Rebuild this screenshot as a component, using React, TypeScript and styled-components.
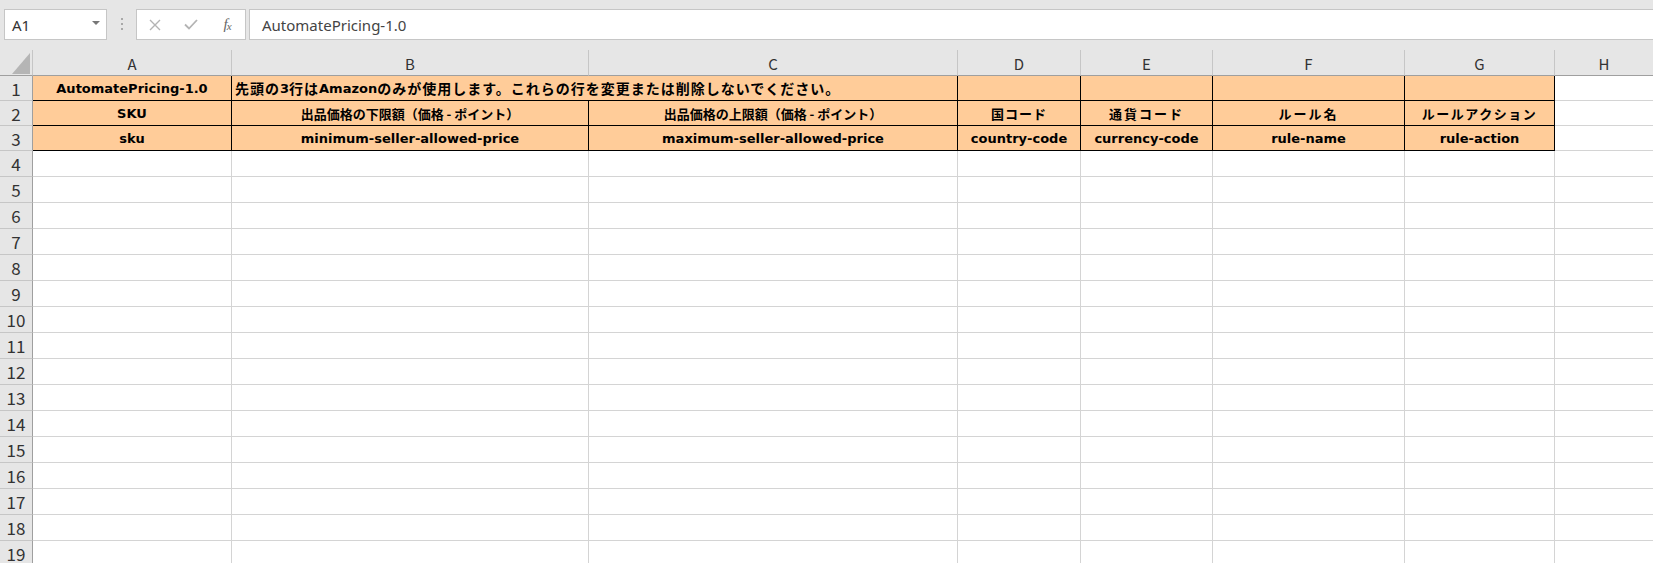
import React from 'react';
import styled, { createGlobalStyle } from 'styled-components';

const GlobalStyle = createGlobalStyle`
  html, body {
    margin: 0;
    padding: 0;
    background: #e6e6e6;
    overflow: hidden;
  }
  body {
    width: 1653px;
    height: 563px;
    font-family: "Noto Sans", "Noto Sans CJK JP", sans-serif;
  }
`;

const Window = styled.div`
  width: 1653px;
  height: 563px;
  display: flex;
  flex-direction: column;
  overflow: hidden;
  background: #e6e6e6;
`;

/* ---------- formula bar ---------- */

const FormulaBar = styled.div`
  flex-shrink: 0;
  height: 50px;
  box-sizing: border-box;
  padding: 9px 0 0 4px;
  display: flex;
  align-items: flex-start;
`;

const NameBox = styled.div`
  box-sizing: border-box;
  width: 103px;
  height: 31px;
  background: #fff;
  border: 1px solid #c6c6c6;
  display: flex;
  align-items: center;
  justify-content: space-between;
  padding: 0 6px 0 7px;
  font: 15px "Noto Sans", sans-serif;
  color: #333;
`;

const DropArrow = styled.span`
  width: 0;
  height: 0;
  border-left: 4px solid transparent;
  border-right: 4px solid transparent;
  border-top: 4px solid #777;
  margin-top: -4px;
`;

const Grip = styled.div`
  width: 29px;
  height: 31px;
  display: flex;
  flex-direction: column;
  align-items: center;
  justify-content: center;
  gap: 3px;
  padding-bottom: 2px;
  box-sizing: border-box;
`;

const GripDot = styled.span`
  width: 2px;
  height: 2px;
  background: #a8a8a8;
`;

const FuncBox = styled.div`
  box-sizing: border-box;
  width: 110px;
  height: 31px;
  background: #fff;
  border: 1px solid #c6c6c6;
  display: flex;
  align-items: center;
  padding-left: 10px;
  gap: 20px;
`;

const FuncIcon = styled.span`
  width: 16px;
  height: 16px;
  display: flex;
  align-items: center;
  justify-content: center;
`;

const Fx = styled.span`
  font-family: "Liberation Serif", serif;
  font-style: italic;
  font-size: 15px;
  color: #666;
  letter-spacing: -1px;
  line-height: 1;
`;

const FxSub = styled.span`
  font-size: 11px;
  position: relative;
  top: 1px;
`;

const FormulaInput = styled.div`
  box-sizing: border-box;
  flex: 1;
  margin-left: 3px;
  height: 31px;
  background: #fff;
  border: 1px solid #c6c6c6;
  border-right: none;
  display: flex;
  align-items: center;
  padding-left: 12px;
  font: 15px "Noto Sans", sans-serif;
  color: #444;
`;

/* ---------- sheet ---------- */

const Sheet = styled.div`
  display: grid;
  grid-template-columns: 33px 199px 357px 369px 123px 132px 192px 150px 99px;
  grid-template-rows: 26px 25px 25px 25px repeat(16, 26px);
  background: #fff;
`;

const Corner = styled.div`
  box-sizing: border-box;
  background: #e6e6e6;
  border-right: 1px solid #c6c6c6;
  border-bottom: 1px solid #9f9f9f;
  display: flex;
  align-items: flex-end;
  justify-content: flex-end;
  padding: 0 2px 1px 0;
`;

const ColHeader = styled.div`
  box-sizing: border-box;
  background: #e6e6e6;
  border-right: 1px solid #c6c6c6;
  border-bottom: 1px solid #9f9f9f;
  display: flex;
  align-items: center;
  justify-content: center;
  font: 15px "Noto Sans CJK JP", sans-serif;
  color: #333;
  padding-top: 1px;
`;

const RowHeader = styled.div`
  box-sizing: border-box;
  background: #e6e6e6;
  border-right: 1px solid #9f9f9f;
  border-bottom: 1px solid #c6c6c6;
  display: flex;
  align-items: center;
  justify-content: center;
  font: 17px "Noto Sans CJK JP", sans-serif;
  color: #333;
`;

const Cell = styled.div<{ $filled?: boolean; $left?: boolean; $span?: number }>`
  box-sizing: border-box;
  min-width: 0;
  grid-column: span ${p => p.$span ?? 1};
  display: flex;
  align-items: center;
  justify-content: ${p => (p.$left ? 'flex-start' : 'center')};
  padding: 0 3px;
  background: ${p => (p.$filled ? '#ffcc99' : '#fff')};
  border-right: 1px solid ${p => (p.$filled ? '#000' : '#d4d4d4')};
  border-bottom: 1px solid ${p => (p.$filled ? '#000' : '#d4d4d4')};
  font: bold 13px "DejaVu Sans", "Noto Sans CJK JP", sans-serif;
  color: #000;
  white-space: nowrap;
  overflow: visible;
`;

const Jp = styled.span<{ $size?: number; $spacing?: number }>`
  font-family: "Noto Sans CJK JP", sans-serif;
  font-weight: 700;
  font-size: ${p => p.$size ?? 13}px;
  letter-spacing: ${p => p.$spacing ?? 0}px;
`;

const columns = ['A', 'B', 'C', 'D', 'E', 'F', 'G', 'H'];

const CloseIcon = () => (
  <svg width="12" height="12" viewBox="0 0 12 12">
    <path d="M1 1 L11 11 M11 1 L1 11" stroke="#b4b4b4" strokeWidth="1.4" fill="none" />
  </svg>
);

const CheckIcon = () => (
  <svg width="14" height="11" viewBox="0 0 14 11">
    <path d="M1 5.5 L5 9.5 L13 1" stroke="#b4b4b4" strokeWidth="1.8" fill="none" />
  </svg>
);

const SelectAll = () => (
  <svg width="18" height="21" viewBox="0 0 18 21">
    <polygon points="18,0 18,21 0,21" fill="#b5b5b5" />
  </svg>
);

export default function App() {
  const emptyRows = Array.from({ length: 16 }, (_, i) => i + 4);
  return (
    <Window>
      <GlobalStyle />
      <FormulaBar>
        <NameBox>
          <span>A1</span>
          <DropArrow />
        </NameBox>
        <Grip>
          <GripDot />
          <GripDot />
          <GripDot />
        </Grip>
        <FuncBox>
          <FuncIcon>
            <CloseIcon />
          </FuncIcon>
          <FuncIcon>
            <CheckIcon />
          </FuncIcon>
          <FuncIcon>
            <Fx>
              f<FxSub>x</FxSub>
            </Fx>
          </FuncIcon>
        </FuncBox>
        <FormulaInput>AutomatePricing-1.0</FormulaInput>
      </FormulaBar>

      <Sheet>
        <Corner>
          <SelectAll />
        </Corner>
        {columns.map(c => (
          <ColHeader key={c}>{c}</ColHeader>
        ))}

        <RowHeader>1</RowHeader>
        <Cell $filled>AutomatePricing-1.0</Cell>
        <Cell $filled $left $span={2}>
          <Jp $size={14} $spacing={1}>先頭の</Jp>3<Jp $size={14} $spacing={1}>行は</Jp>Amazon
          <Jp $size={14} $spacing={1}>のみが使用します。これらの行を変更または削除しないでください。</Jp>
        </Cell>
        <Cell $filled />
        <Cell $filled />
        <Cell $filled />
        <Cell $filled />
        <Cell />

        <RowHeader>2</RowHeader>
        <Cell $filled>SKU</Cell>
        <Cell $filled>
          <Jp>出品価格の下限額（価格 - ポイント）</Jp>
        </Cell>
        <Cell $filled>
          <Jp>出品価格の上限額（価格 - ポイント）</Jp>
        </Cell>
        <Cell $filled>
          <Jp $spacing={1}>国コード</Jp>
        </Cell>
        <Cell $filled>
          <Jp $spacing={2}>通貨コード</Jp>
        </Cell>
        <Cell $filled>
          <Jp $spacing={2}>ルール名</Jp>
        </Cell>
        <Cell $filled>
          <Jp $spacing={1.5}>ルールアクション</Jp>
        </Cell>
        <Cell />

        <RowHeader>3</RowHeader>
        <Cell $filled>sku</Cell>
        <Cell $filled>minimum-seller-allowed-price</Cell>
        <Cell $filled>maximum-seller-allowed-price</Cell>
        <Cell $filled>country-code</Cell>
        <Cell $filled>currency-code</Cell>
        <Cell $filled>rule-name</Cell>
        <Cell $filled>rule-action</Cell>
        <Cell />

        {emptyRows.map(r => (
          <React.Fragment key={r}>
            <RowHeader>{r}</RowHeader>
            {columns.map(c => (
              <Cell key={c} />
            ))}
          </React.Fragment>
        ))}
      </Sheet>
    </Window>
  );
}
